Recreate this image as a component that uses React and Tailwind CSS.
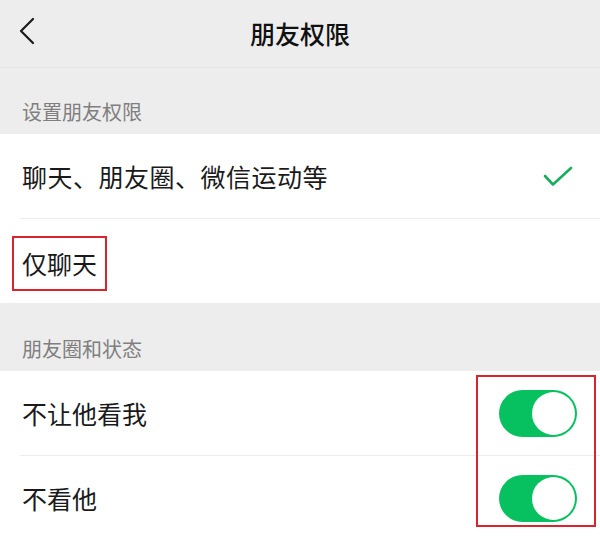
import React from "react";

const font = { fontFamily: '"Noto Sans CJK SC", "Noto Sans", sans-serif' };

const SectionLabel = ({ children, height }) => (
    <div className={`flex items-end px-[22px] pb-[12px] ${height}`}>
        <span className="text-[20px] leading-none text-[#7f7f7f]">{children}</span>
    </div>
);

const Toggle = () => (
    <div className="flex h-[47px] w-[78px] items-center justify-end rounded-full bg-[#07c160] p-[2px]">
        <div className="h-[43px] w-[43px] rounded-full bg-white" />
    </div>
);

const Check = () => (
    <svg width="30" height="21" viewBox="0 0 30 21" fill="none">
        <polyline
            points="2,10 10,18.5 28,2"
            stroke="#1aad5f"
            strokeWidth="2.6"
            strokeLinecap="round"
            strokeLinejoin="round"
        />
    </svg>
);

const App = () => {
    return (
        <div className="min-h-[538px] w-[600px] bg-[#ededed]" style={font}>
            {/* header */}
            <div className="relative flex h-[68px] items-center justify-center border-b border-[#e6e6e6]">
                <svg
                    className="absolute left-[18px] top-[17px]"
                    width="18"
                    height="28"
                    viewBox="0 0 18 28"
                    fill="none"
                >
                    <polyline
                        points="15,2 3,14 15,26"
                        stroke="#1a1a1a"
                        strokeWidth="2.2"
                        strokeLinecap="round"
                        strokeLinejoin="round"
                    />
                </svg>
                <span className="text-[25px] font-medium leading-none text-[#111]">
                    朋友权限
                </span>
            </div>

            <SectionLabel height="h-[66px]">设置朋友权限</SectionLabel>

            <div className="bg-white">
                <div className="flex h-[84px] items-center justify-between pl-[22px] pr-[27px]">
                    <span className="text-[25px] leading-none tracking-[0.5px] text-[#1a1a1a]">
                        聊天、朋友圈、微信运动等
                    </span>
                    <Check />
                </div>
                <div className="ml-[20px] border-t border-[#ececec]" />
                <div className="flex h-[84px] items-center pl-[12px] pt-[4px]">
                    <span className="flex h-[55px] items-center border-2 border-[#d9232d] px-[8px] text-[25px] leading-none text-[#1a1a1a]">
                        仅聊天
                    </span>
                </div>
            </div>

            <SectionLabel height="h-[68px]">朋友圈和状态</SectionLabel>

            <div className="relative bg-white">
                <div className="flex h-[84px] items-center justify-between pl-[22px] pr-[23px]">
                    <span className="text-[25px] leading-none text-[#1a1a1a]">
                        不让他看我
                    </span>
                    <Toggle />
                </div>
                <div className="ml-[20px] border-t border-[#ececec]" />
                <div className="flex h-[84px] items-center justify-between pl-[22px] pr-[23px]">
                    <span className="text-[25px] leading-none text-[#1a1a1a]">
                        不看他
                    </span>
                    <Toggle />
                </div>
                <div className="pointer-events-none absolute right-[4px] top-[4px] h-[152px] w-[120px] border-2 border-[#d9232d]" />
            </div>
        </div>
    );
};

export default App;
